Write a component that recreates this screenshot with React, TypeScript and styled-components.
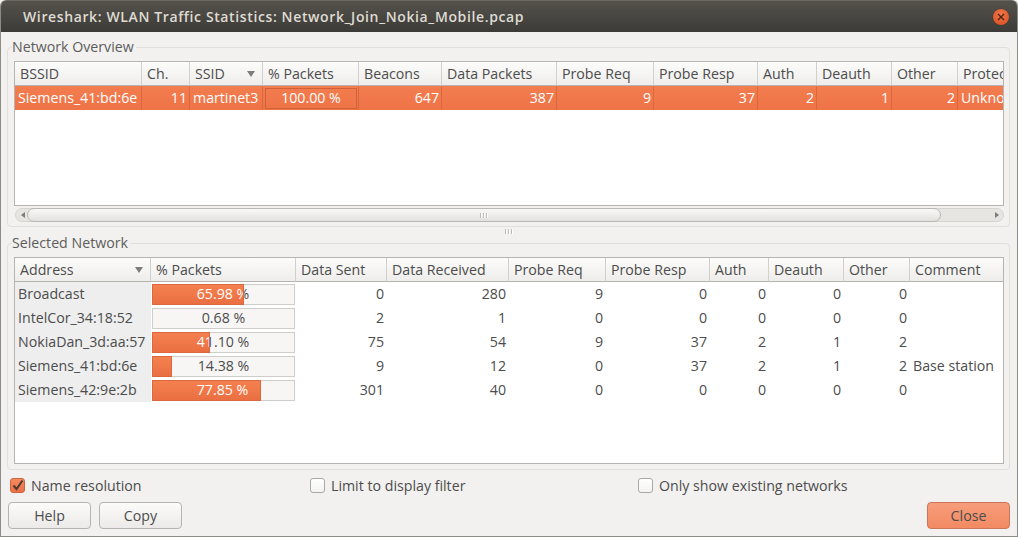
import React from "react";
import styled, { createGlobalStyle } from "styled-components";

const GlobalStyle = createGlobalStyle`
  html, body {
    margin: 0;
    padding: 0;
    background: #f2f1f0;
  }
  * { box-sizing: border-box; }
`;

const Window = styled.div`
  width: 1018px;
  height: 537px;
  display: flex;
  flex-direction: column;
  overflow: hidden;
  font-family: "Open Sans", "Noto Sans", sans-serif;
  font-size: 14.2px;
  color: #4c4c4c;
  background: #f2f1f0;
  border: 1px solid #8d8b86;
  border-top: none;
  border-radius: 6px 6px 0 0;
`;

const TitleBar = styled.div`
  height: 32px;
  flex: none;
  display: flex;
  align-items: center;
  justify-content: space-between;
  padding: 0 9px 0 23px;
  margin: 0 -1px;
  background: linear-gradient(#55524c, #3c3b37);
  border-top: 1px solid #6a6862;
  border-radius: 6px 6px 0 0;
`;

const Title = styled.span`
  color: #dfdbd2;
  font-weight: 600;
  font-size: 14px;
  letter-spacing: 0.62px;
`;

const CloseDot = styled.div`
  width: 16px;
  height: 16px;
  border-radius: 50%;
  background: radial-gradient(circle at 50% 35%, #f0794a, #d9491c);
  display: flex;
  align-items: center;
  justify-content: center;
  box-shadow: 0 0 1px #2d2c29;
`;

const Content = styled.div`
  flex: 1;
  display: flex;
  flex-direction: column;
  padding: 0 7px 7px 6px;
`;

const Frame = styled.section<{ $height: number }>`
  position: relative;
  height: ${(p) => p.$height}px;
  flex: none;
  margin-top: ${(p) => (p.$height > 200 ? 0 : 15)}px;
  border: 1px solid #e0dfdc;
  border-radius: 4px;
  padding: 13px 5px 0 6px;
`;

const Legend = styled.span`
  position: absolute;
  top: -10px;
  left: 4px;
  padding-right: 2px;
  line-height: 17px;
  background: #f2f1f0;
  color: #5d5d5b;
`;

const TableBox = styled.div<{ $height: number }>`
  height: ${(p) => p.$height}px;
  background: #fff;
  border: 1px solid #b6b4b0;
  overflow: hidden;
`;

const Grid = styled.table`
  width: 990px;
  border-collapse: separate;
  border-spacing: 0;
  table-layout: fixed;
`;

const Head = styled.th`
  position: relative;
  height: 24px;
  padding: 0 5px;
  text-align: left;
  font-weight: 400;
  white-space: nowrap;
  overflow: hidden;
  color: #4c4c4c;
  background: linear-gradient(#fcfcfb, #eeedeb);
  border-right: 1px solid #d2d0cc;
  border-bottom: 1px solid #b6b4b0;
`;

const SortArrow = styled.i`
  position: absolute;
  right: 7px;
  top: 9px;
  width: 0;
  height: 0;
  border-left: 4px solid transparent;
  border-right: 4px solid transparent;
  border-top: 6px solid #7d7c78;
`;

const Cell = styled.td<{ $num?: boolean; $selected?: boolean; $sorted?: boolean }>`
  height: 24px;
  padding: 0 2px 1px 3px;
  white-space: nowrap;
  overflow: hidden;
  text-align: ${(p) => (p.$num ? "right" : "left")};
  color: ${(p) => (p.$selected ? "#fff" : "#4c4c4c")};
  background: ${(p) =>
    p.$selected
      ? "linear-gradient(#f37d4f, #ee7347)"
      : p.$sorted
        ? "#eeeeee"
        : "transparent"};
  border-right: 1px solid ${(p) => (p.$selected ? "#d9683e" : "transparent")};
`;

const SelectedBar = styled.div`
  height: 21px;
  margin: 1px -1px 0 -1px;
  text-align: center;
  line-height: 18px;
  border: 1px solid #cf6239;
`;

const BarCell = styled.td`
  height: 24px;
  padding: 1px;
`;

const Track = styled.div`
  position: relative;
  height: 21px;
  line-height: 18px;
  text-align: center;
  color: #4c4c4c;
  background: #f7f6f5;
  border: 1px solid #cfcdc9;
`;

const Fill = styled.div`
  position: absolute;
  left: -1px;
  top: -1px;
  bottom: -1px;
  overflow: hidden;
  background: linear-gradient(#f5804f, #ea6f42);
  border: 1px solid #d9683e;
  color: #fff;
`;

const FillText = styled.div`
  width: 141px;
  margin-left: -1px;
  text-align: center;
`;

const ScrollRow = styled.div`
  height: 14px;
  margin: 2px 0 0 1px;
  display: flex;
  align-items: center;
  background: #e6e5e2;
  border: 1px solid #d6d4d0;
  border-radius: 7px;
  position: relative;
`;

const ScrollEnd = styled.i<{ $right?: boolean }>`
  width: 0;
  height: 0;
  flex: none;
  margin: ${(p) => (p.$right ? "0 4px 0 auto" : "0 0 0 5px")};
  border-top: 3px solid transparent;
  border-bottom: 3px solid transparent;
  border-right: ${(p) => (p.$right ? "none" : "4px solid #7d7c78")};
  border-left: ${(p) => (p.$right ? "4px solid #7d7c78" : "none")};
`;

const Thumb = styled.div`
  position: absolute;
  left: 11px;
  width: 914px;
  top: -1px;
  bottom: -1px;
  border: 1px solid #b9b7b3;
  border-radius: 7px;
  background: linear-gradient(#f8f8f7, #e2e1de);
  display: flex;
  align-items: center;
  justify-content: center;
  gap: 1px;
`;

const Dot = styled.b`
  width: 2px;
  height: 5px;
  background: #bdbbb7;
  border-right: 1px solid #fff;
`;

const Splitter = styled.div`
  height: 16px;
  flex: none;
  display: flex;
  align-items: flex-start;
  justify-content: center;
  gap: 1px;
  padding-top: 2px;
`;

const OptionRow = styled.div`
  display: grid;
  grid-template-columns: 300px 328px 1fr;
  align-items: center;
  height: 18px;
  margin-top: 6px;
  padding-left: 3px;
`;

const Option = styled.label`
  display: flex;
  align-items: center;
  gap: 6px;
  color: #4c4c4c;
`;

const Box = styled.span<{ $checked?: boolean }>`
  width: 15px;
  height: 15px;
  border-radius: 3px;
  border: 1px solid ${(p) => (p.$checked ? "#c9683f" : "#aaa8a4")};
  background: ${(p) => (p.$checked ? "linear-gradient(#f5895e, #ec7044)" : "linear-gradient(#fff, #f4f3f2)")};
  display: flex;
  align-items: center;
  justify-content: center;
`;

const ButtonRow = styled.div`
  display: flex;
  gap: 8px;
  margin-top: 8px;
  padding-left: 1px;
`;

const Button = styled.button<{ $primary?: boolean }>`
  width: 83px;
  height: 27px;
  padding: 0;
  font: inherit;
  color: #4c4c4c;
  border-radius: 4px;
  border: 1px solid ${(p) => (p.$primary ? "#c9765a" : "#b6b4b0")};
  background: ${(p) =>
    p.$primary
      ? "linear-gradient(#f79d7b, #f28a63)"
      : "linear-gradient(#fbfbfa, #eceae8)"};
  margin-left: ${(p) => (p.$primary ? "auto" : "0")};
`;

const overviewCols = [127, 48, 73, 96, 83, 115, 97, 104, 59, 75, 66, 47];
const overviewHeads = ["BSSID", "Ch.", "SSID", "% Packets", "Beacons", "Data Packets", "Probe Req", "Probe Resp", "Auth", "Deauth", "Other", "Protection"];

const selectedCols = [136, 145, 91, 122, 97, 104, 59, 75, 66, 95];
const selectedHeads = ["Address", "% Packets", "Data Sent", "Data Received", "Probe Req", "Probe Resp", "Auth", "Deauth", "Other", "Comment"];

const nodes = [
  { address: "Broadcast", pct: 65.98, values: [0, 280, 9, 0, 0, 0, 0], comment: "" },
  { address: "IntelCor_34:18:52", pct: 0.68, values: [2, 1, 0, 0, 0, 0, 0], comment: "" },
  { address: "NokiaDan_3d:aa:57", pct: 41.1, values: [75, 54, 9, 37, 2, 1, 2], comment: "" },
  { address: "Siemens_41:bd:6e", pct: 14.38, values: [9, 12, 0, 37, 2, 1, 2], comment: "Base station" },
  { address: "Siemens_42:9e:2b", pct: 77.85, values: [301, 40, 0, 0, 0, 0, 0], comment: "" },
];

function Columns({ widths }: { widths: number[] }) {
  return (
    <colgroup>
      {widths.map((w, i) => (
        <col key={i} width={w} />
      ))}
    </colgroup>
  );
}

function Dots() {
  return (
    <>
      <Dot />
      <Dot />
      <Dot />
    </>
  );
}

function PacketBar({ pct }: { pct: number }) {
  const label = pct.toFixed(2) + " %";
  const width = Math.round((pct / 100) * 140);
  return (
    <Track>
      {label}
      {width > 1 ? (
        <Fill style={{ width }}>
          <FillText>{label}</FillText>
        </Fill>
      ) : null}
    </Track>
  );
}

function Check() {
  return (
    <svg width="13" height="13" viewBox="0 0 13 13">
      <path d="M2.5 6.5 L5.5 10 L11.5 1.5" fill="none" stroke="#4a3a32" strokeWidth="2" />
    </svg>
  );
}

export default function App() {
  return (
    <>
      <GlobalStyle />
      <Window>
        <TitleBar>
          <Title>Wireshark: WLAN Traffic Statistics: Network_Join_Nokia_Mobile.pcap</Title>
          <CloseDot>
            <svg width="8" height="8" viewBox="0 0 8 8">
              <path d="M1 1 L7 7 M7 1 L1 7" stroke="#4a2312" strokeWidth="1.4" />
            </svg>
          </CloseDot>
        </TitleBar>
        <Content>
          <Frame $height={180}>
            <Legend>Network Overview</Legend>
            <TableBox $height={145}>
              <Grid>
                <Columns widths={overviewCols} />
                <thead>
                  <tr>
                    {overviewHeads.map((h) => (
                      <Head key={h}>
                        {h}
                        {h === "SSID" ? <SortArrow /> : null}
                      </Head>
                    ))}
                  </tr>
                </thead>
                <tbody>
                  <tr>
                    <Cell $selected>Siemens_41:bd:6e</Cell>
                    <Cell $selected $num>11</Cell>
                    <Cell $selected>martinet3</Cell>
                    <Cell $selected><SelectedBar>100.00 %</SelectedBar></Cell>
                    <Cell $selected $num>647</Cell>
                    <Cell $selected $num>387</Cell>
                    <Cell $selected $num>9</Cell>
                    <Cell $selected $num>37</Cell>
                    <Cell $selected $num>2</Cell>
                    <Cell $selected $num>1</Cell>
                    <Cell $selected $num>2</Cell>
                    <Cell $selected>Unknown</Cell>
                  </tr>
                </tbody>
              </Grid>
            </TableBox>
            <ScrollRow>
              <ScrollEnd />
              <Thumb><Dots /></Thumb>
              <ScrollEnd $right />
            </ScrollRow>
          </Frame>
          <Splitter><Dots /></Splitter>
          <Frame $height={227}>
            <Legend>Selected Network</Legend>
            <TableBox $height={207}>
              <Grid>
                <Columns widths={selectedCols} />
                <thead>
                  <tr>
                    {selectedHeads.map((h) => (
                      <Head key={h}>
                        {h}
                        {h === "Address" ? <SortArrow /> : null}
                      </Head>
                    ))}
                  </tr>
                </thead>
                <tbody>
                  {nodes.map((n) => (
                    <tr key={n.address}>
                      <Cell $sorted>{n.address}</Cell>
                      <BarCell><PacketBar pct={n.pct} /></BarCell>
                      {n.values.map((v, i) => (
                        <Cell key={i} $num>{v}</Cell>
                      ))}
                      <Cell>{n.comment}</Cell>
                    </tr>
                  ))}
                </tbody>
              </Grid>
            </TableBox>
          </Frame>
          <OptionRow>
            <Option><Box $checked><Check /></Box>Name resolution</Option>
            <Option><Box />Limit to display filter</Option>
            <Option><Box />Only show existing networks</Option>
          </OptionRow>
          <ButtonRow>
            <Button>Help</Button>
            <Button>Copy</Button>
            <Button $primary>Close</Button>
          </ButtonRow>
        </Content>
      </Window>
    </>
  );
}
